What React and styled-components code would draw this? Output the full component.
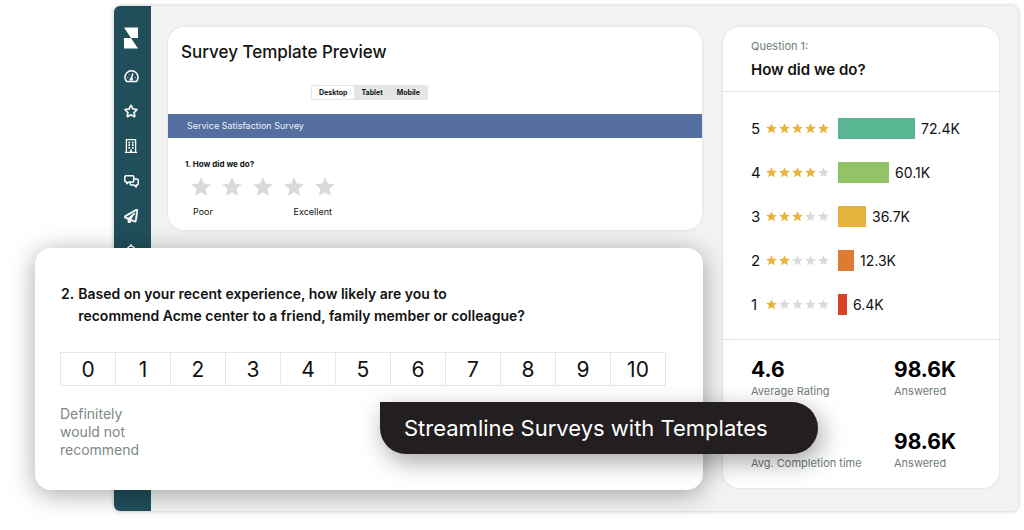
import React, { useState } from 'react';
import styled, { createGlobalStyle } from 'styled-components';
import { FaRegStar, FaRegBuilding, FaRegPaperPlane, FaRegBell } from 'react-icons/fa';

const ratings = [
	{ score: 5, total: '72.4K', width: 77, color: '#59b692' },
	{ score: 4, total: '60.1K', width: 51, color: '#93c367' },
	{ score: 3, total: '36.7K', width: 28, color: '#e6b23e' },
	{ score: 2, total: '12.3K', width: 16, color: '#de7b33' },
	{ score: 1, total: '6.4K', width: 9, color: '#d84328' },
];

const devices = ['Desktop', 'Tablet', 'Mobile'];
const stars = [1, 2, 3, 4, 5];
const scale = [0, 1, 2, 3, 4, 5, 6, 7, 8, 9, 10];

const Star = ({ size, color }) => (
	<svg width={size} height={size} viewBox="0 0 20 20" fill={color} aria-hidden="true">
		<path d="M10 .3l2.8 6.300 7 .7-5.300 4.600 1.600 6.900-6.100-3.600-6.100 3.600 1.600-6.900L.2 7.300l7-.7z" />
	</svg>
);

const Logo = () => (
	<svg width="14" height="22" viewBox="0 0 14 22" fill="white" aria-hidden="true">
		<path d="M0 .5h14v10.500H7zM0 11h7l7 10.500H0z" />
	</svg>
);

const GaugeIcon = () => (
	<svg width="15" height="13" viewBox="0 0 15 13" fill="none" stroke="white" aria-hidden="true">
		<path
			d="M2.6 11.6A6.5 6.5 0 0 1 1 7.3a6.5 6.5 0 0 1 13 0 6.5 6.5 0 0 1-1.6 4.3z"
			strokeWidth="1.5"
			strokeLinejoin="round"
		/>
		<path d="M8.6 4L7.4 9" strokeWidth="1.5" strokeLinecap="round" />
		<circle cx="7.3" cy="9.2" r="1.6" fill="white" stroke="none" />
		<path d="M3.4 7.6h.9M4.7 4.5l.6.6M10.8 7.6h.9" strokeWidth="1" />
	</svg>
);

const ChatIcon = () => (
	<svg width="15" height="13" viewBox="0 0 15 13" fill="none" stroke="white" aria-hidden="true">
		<path
			d="M2 .8h6.6a1.2 1.2 0 0 1 1.2 1.2v3.8A1.2 1.2 0 0 1 8.6 7H5L2.8 8.7V7H2A1.2 1.2 0 0 1 .8 5.8V2A1.2 1.2 0 0 1 2 .8z"
			strokeWidth="1.5"
			strokeLinejoin="round"
		/>
		<path
			d="M10 3.9h3a1.2 1.2 0 0 1 1.2 1.2v3.7A1.2 1.2 0 0 1 13 10h-.8v2L9.8 10H7.4a1.2 1.2 0 0 1-1.2-1.2V7"
			strokeWidth="1.5"
			strokeLinejoin="round"
		/>
	</svg>
);

const App = () => {
	const [device, setDevice] = useState('Desktop');
	const [rating, setRating] = useState(0);

	return (
		<>
			<GlobalStyle />
			<Page>
				<Window>
					<Sidebar>
						<HomeLink href="#home" aria-label="Home">
							<Logo />
						</HomeLink>
						<SideLink href="#dashboard" aria-label="Dashboard">
							<GaugeIcon />
						</SideLink>
						<SideLink href="#reviews" aria-label="Reviews">
							<FaRegStar strokeWidth={22} />
						</SideLink>
						<SideLink href="#locations" aria-label="Locations">
							<FaRegBuilding />
						</SideLink>
						<SideLink href="#messages" aria-label="Messages">
							<ChatIcon />
						</SideLink>
						<SideLink href="#campaigns" aria-label="Campaigns">
							<FaRegPaperPlane strokeWidth={22} />
						</SideLink>
						<SideLink href="#alerts" aria-label="Alerts">
							<FaRegBell />
						</SideLink>
					</Sidebar>
					<Main>
						<PreviewCard>
							<Title>Survey Template Preview</Title>
							<Devices>
								{devices.map((name) => (
									<DeviceButton
										key={name}
										type="button"
										$active={name === device}
										onClick={() => setDevice(name)}
									>
										{name}
									</DeviceButton>
								))}
							</Devices>
							<SurveyName>Service Satisfaction Survey</SurveyName>
							<Question>
								<QuestionText>1. How did we do?</QuestionText>
								<StarPicker>
									{stars.map((n) => (
										<StarButton
											key={n}
											type="button"
											aria-label={`${n} of 5`}
											onClick={() => setRating(n)}
										>
											<Star size={20} color={n <= rating ? '#e8b53c' : '#dadada'} />
										</StarButton>
									))}
								</StarPicker>
								<Ends>
									<span>Poor</span>
									<span>Excellent</span>
								</Ends>
							</Question>
						</PreviewCard>

						<ResultsCard>
							<ResultsHeader>
								<Caption>Question 1:</Caption>
								<ResultsTitle>How did we do?</ResultsTitle>
							</ResultsHeader>
							<Chart>
								{ratings.map(({ score, total, width, color }) => (
									<ChartRow key={score}>
										<Score>{score}</Score>
										<RowStars>
											{stars.map((n) => (
												<Star key={n} size={11} color={n <= score ? '#e8b53c' : '#dadada'} />
											))}
										</RowStars>
										<Bar style={{ width }} $color={color} />
										<span>{total}</span>
									</ChartRow>
								))}
							</Chart>
							<Stats>
								<Stat>
									<StatValue>4.6</StatValue>
									<Caption>Average Rating</Caption>
								</Stat>
								<Stat>
									<StatValue>98.6K</StatValue>
									<Caption>Answered</Caption>
								</Stat>
								<Stat>
									<Caption>Avg. Completion time</Caption>
								</Stat>
								<Stat>
									<StatValue>98.6K</StatValue>
									<Caption>Answered</Caption>
								</Stat>
							</Stats>
						</ResultsCard>
					</Main>
				</Window>

				<FloatingCard>
					<FloatingQuestion>
						<span>2.</span>
						<span>
							Based on your recent experience, how likely are you to
							<br />
							recommend Acme center to a friend, family member or colleague?
						</span>
					</FloatingQuestion>
					<Scale>
						{scale.map((n) => (
							<ScaleButton key={n} type="button">
								{n}
							</ScaleButton>
						))}
					</Scale>
					<ScaleLabel>Definitely would not recommend</ScaleLabel>
				</FloatingCard>
				<Banner>Streamline Surveys with Templates</Banner>
			</Page>
		</>
	);
};

export default App;

const GlobalStyle = createGlobalStyle`
	* {
		box-sizing: border-box;
	}

	body {
		background: white;
		color: #121212;
		font-family: Inter, "Liberation Sans", sans-serif;
		margin: 0;
	}

	h1, h2, p {
		margin: 0;
	}

	button {
		background: none;
		border: none;
		color: inherit;
		cursor: pointer;
		font-family: inherit;
		padding: 0;
	}

	svg {
		display: block;
	}
`;

const Page = styled.div`
	overflow: hidden;
	padding: 6px 6px 18px 114px;
	position: relative;
`;

const Window = styled.div`
	background: #f2f4f4;
	border-radius: 6px;
	box-shadow: 0 0 4px rgba(0, 0, 0, 0.25);
	display: flex;
`;

const Sidebar = styled.nav`
	align-items: center;
	background: #204f5b;
	border-radius: 6px 0 0 6px;
	display: flex;
	flex: 0 0 37px;
	flex-direction: column;
	gap: 11px;
	padding: 17px 3px 0 0;
`;

const SideLink = styled.a`
	align-items: center;
	color: white;
	display: flex;
	font-size: 14px;
	height: 24px;
	justify-content: center;
	width: 24px;
`;

const HomeLink = styled(SideLink)`
	height: 30px;
`;

const Main = styled.main`
	align-items: start;
	display: grid;
	flex: 1;
	gap: 21px;
	grid-template-columns: 1fr 276px;
	padding: 21px 19px 23px 17px;
`;

const Card = styled.section`
	background: white;
	border-radius: 16px;
	box-shadow: 0 0 3px rgba(0, 0, 0, 0.12);
`;

const PreviewCard = styled(Card)`
	padding: 13px 0 12px;
`;

const Title = styled.h1`
	font-size: 17px;
	font-weight: 500;
	line-height: 24px;
	padding-left: 13px;
`;

const Devices = styled.div`
	background: #e4e6e6;
	border-radius: 3px;
	display: inline-flex;
	height: 15px;
	margin: 21px 0 14px 143px;
	padding: 1px;
	vertical-align: top;
`;

const DeviceButton = styled.button`
	background: ${({ $active }) => ($active ? 'white' : 'transparent')};
	border-radius: 2px;
	font-size: 7px;
	font-weight: 700;
	line-height: 13px;
	padding: 0 7px;
`;

const SurveyName = styled.p`
	background: #536e9f;
	color: #eef2f9;
	font-size: 9px;
	line-height: 24px;
	padding-left: 19px;
`;

const Question = styled.div`
	padding: 20px 17px 0;
`;

const QuestionText = styled.p`
	font-size: 8px;
	font-weight: 700;
	line-height: 12px;
`;

const StarPicker = styled.div`
	display: flex;
	gap: 11px;
	margin: 7px 0 9px 6px;
`;

const StarButton = styled.button`
	height: 20px;
	width: 20px;
`;

const Ends = styled.div`
	display: flex;
	font-size: 9px;
	justify-content: space-between;
	line-height: 12px;
	margin-left: 8px;
	width: 139px;
`;

const ResultsCard = styled(Card)`
	color: #121212;
`;

const ResultsHeader = styled.header`
	border-bottom: 1px solid #e6e8e8;
	padding: 11px 28px;
`;

const Caption = styled.p`
	color: #6f7b79;
	font-size: 11px;
	line-height: 16px;
`;

const ResultsTitle = styled.h2`
	font-size: 15px;
	font-weight: 600;
	line-height: 20px;
	margin-top: 6px;
`;

const Chart = styled.div`
	border-bottom: 1px solid #e6e8e8;
	display: grid;
	gap: 23px;
	padding: 26px 28px 24px;
`;

const ChartRow = styled.div`
	align-items: center;
	display: flex;
	font-size: 14px;
	height: 21px;
`;

const Score = styled.span`
	font-size: 15px;
	width: 15px;
`;

const RowStars = styled.span`
	display: flex;
	gap: 2px;
`;

const Bar = styled.span`
	background: ${({ $color }) => $color};
	height: 21px;
	margin: 0 6px 0 9px;
`;

const Stats = styled.div`
	align-items: end;
	display: grid;
	gap: 30px 0;
	grid-template-columns: 143px 1fr;
	padding: 17px 0 17px 28px;
`;

const Stat = styled.div`
	white-space: nowrap;
`;

const StatValue = styled.p`
	color: black;
	font-size: 21px;
	font-weight: 700;
	line-height: 26px;
`;

const FloatingCard = styled.section`
	background: white;
	border-radius: 16px;
	box-shadow: 0 4px 26px rgba(0, 0, 0, 0.35);
	left: 35px;
	padding: 35px 37px 31px 25px;
	position: absolute;
	right: 321px;
	top: 248px;
`;

const FloatingQuestion = styled.p`
	display: flex;
	font-size: 14px;
	font-weight: 600;
	gap: 4px;
	line-height: 22px;
	padding-left: 1px;
`;

const Scale = styled.div`
	border: 1px solid #e6e6e6;
	display: flex;
	height: 34px;
	margin: 25px 0 19px;
`;

const ScaleButton = styled.button`
	flex: 1;
	font-size: 21px;

	& + & {
		border-left: 1px solid #e6e6e6;
	}
`;

const ScaleLabel = styled.p`
	color: #7d8886;
	font-size: 14px;
	line-height: 18px;
	width: 90px;
`;

const Banner = styled.p`
	background: #231f20;
	border-radius: 0 26px 26px 26px;
	box-shadow: 4px 8px 24px rgba(0, 0, 0, 0.35);
	color: white;
	font-size: 22px;
	left: 380px;
	line-height: 52px;
	padding: 0 50px 0 24px;
	position: absolute;
	top: 402px;
	white-space: nowrap;
`;
